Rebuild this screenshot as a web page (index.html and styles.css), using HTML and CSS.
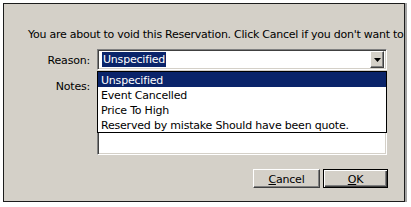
FILE: index.html
```html
<!DOCTYPE html>
<html lang="en">
<head>
    <meta charset="UTF-8">
    <title>Void Reservation</title>
    <link rel="stylesheet" href="styles.css">
</head>
<body>
    <div class="dialog">
        <p class="message">You are about to void this Reservation. Click Cancel if you don't want to</p>

        <div class="form">
            <label class="label">Reason:</label>
            <div class="combo">
                <span class="combo-value"><span class="selected">Unspecified</span></span>
                <span class="combo-btn">
                    <svg width="7" height="4" viewBox="0 0 7 4"><path d="M0 0h7L3.5 4z" fill="#000"/></svg>
                </span>
                <!-- open dropdown list -->
                <ul class="list">
                    <li class="active">Unspecified</li>
                    <li>Event Cancelled</li>
                    <li>Price To High</li>
                    <li>Reserved by mistake Should have been quote.</li>
                </ul>
            </div>

            <label class="label notes-label">Notes:</label>
            <div class="notes"></div>
        </div>

        <div class="buttons">
            <button class="btn"><u>C</u>ancel</button>
            <button class="btn default"><u>O</u>K</button>
        </div>
    </div>
</body>
</html>
```

FILE: styles.css
```css
body {
    margin: 0;
    padding: 3px 0 0 3px;
    background: #fff;
    font-family: "DejaVu Sans", Verdana, sans-serif;
    font-size: 11px;
    letter-spacing: -0.2px;
    color: #000;
}
.dialog {
    width: 400px;
    height: 197px;
    background: #d4d0c8;
    border: 1px solid #1c1c1c;
    box-shadow: 2px 0 0 #a4a4a4;
    display: flex;
    flex-direction: column;
    overflow: hidden;
    position: relative;
}
.message {
    margin: 24px 0 0 24px;
    line-height: 13px;
    white-space: nowrap;
    letter-spacing: -0.25px;
}
.form {
    display: grid;
    grid-template-columns: 86px 290px;
    column-gap: 7px;
    row-gap: 7px;
    margin-top: 8px;
}
.label {
    text-align: right;
    line-height: 13px;
    padding-top: 5px;
}
.notes-label {
    padding-top: 3px;
}
.combo {
    position: relative;
    height: 21px;
    box-sizing: border-box;
    background: #fff;
    border: 1px solid;
    border-color: #808080 #fff #fff #808080;
    box-shadow: inset 1px 1px 0 #404040, inset -1px -1px 0 #d4d0c8;
    display: flex;
    align-items: center;
    padding: 2px 2px 2px 2px;
}
.combo-value {
    flex: 1;
    padding-left: 2px;
}
.selected {
    background: #0a246a;
    color: #fff;
    line-height: 15px;
    display: inline-block;
    padding: 0 1px 0 1px;
}
.combo-btn {
    width: 14px;
    height: 17px;
    box-sizing: border-box;
    background: #d4d0c8;
    border: 1px solid;
    border-color: #fff #404040 #404040 #fff;
    box-shadow: inset -1px -1px 0 #808080;
    display: flex;
    align-items: center;
    justify-content: center;
}
.list {
    position: absolute;
    top: 21px;
    left: -1px;
    width: 290px;
    box-sizing: border-box;
    margin: 0;
    padding: 0;
    list-style: none;
    background: #fff;
    border: 1px solid #000;
    z-index: 2;
}
.list li {
    height: 15px;
    line-height: 13px;
    padding: 2px 0 0 3px;
    box-sizing: border-box;
    white-space: nowrap;
}
.list li.active {
    background: #0a246a;
    color: #fff;
}
.notes {
    height: 78px;
    box-sizing: border-box;
    background: #fff;
    border: 1px solid;
    border-color: #808080 #fff #fff #808080;
    box-shadow: inset 1px 1px 0 #404040, inset -1px -1px 0 #d4d0c8;
}
.buttons {
    margin-top: auto;
    margin-bottom: 13px;
    padding-right: 16px;
    display: flex;
    justify-content: flex-end;
    gap: 3px;
}
.btn {
    width: 67px;
    height: 19px;
    box-sizing: border-box;
    font-family: inherit;
    font-size: 11px;
    letter-spacing: -0.2px;
    background: #d4d0c8;
    color: #000;
    border: 1px solid;
    border-color: #fff #404040 #404040 #fff;
    box-shadow: inset -1px -1px 0 #808080;
    padding: 2px 0 0;
    line-height: 13px;
}
.btn.default {
    width: 65px;
    border: 1px solid #000;
    box-shadow: inset 1px 1px 0 #fff, inset -1px -1px 0 #404040, inset -2px -2px 0 #808080;
}
```
